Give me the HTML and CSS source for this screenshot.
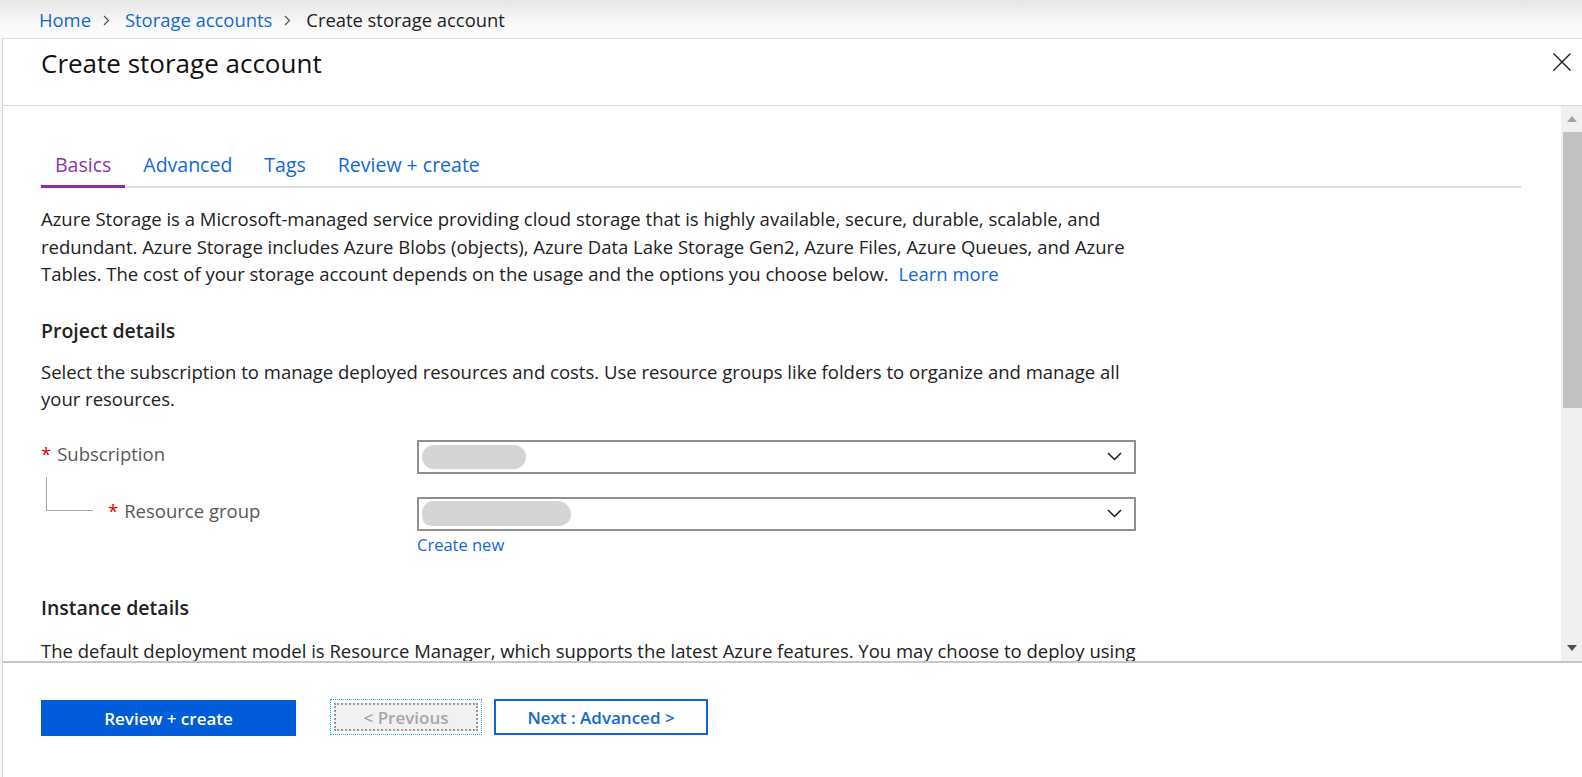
FILE: index.html
```html
<!DOCTYPE html>
<html lang="en">
<head>
<meta charset="utf-8">
<title>Create storage account</title>
<link rel="stylesheet" href="styles.css">
</head>
<body>
<div class="app">
  <nav class="breadcrumb">
    <a class="crumb-link" href="#">Home</a>
    <svg class="crumb-sep" width="7" height="11" viewBox="0 0 7 11"><path d="M1 1l4.5 4.5L1 10" fill="none" stroke="#555" stroke-width="1.2"/></svg>
    <a class="crumb-link" href="#">Storage accounts</a>
    <svg class="crumb-sep" width="7" height="11" viewBox="0 0 7 11"><path d="M1 1l4.5 4.5L1 10" fill="none" stroke="#555" stroke-width="1.2"/></svg>
    <span class="crumb-current">Create storage account</span>
  </nav>
  <section class="blade">
    <header class="blade-header">
      <h1 class="blade-title">Create storage account</h1>
      <button class="blade-close" aria-label="Close">
        <svg width="18" height="18" viewBox="0 0 18 18"><path d="M0.5 0.5L17.5 17.5M17.5 0.5L0.5 17.5" stroke="#1a1a1a" stroke-width="1.3" fill="none"/></svg>
      </button>
    </header>
    <div class="blade-body">
      <div class="blade-content">
        <div class="tabs">
          <a class="tab tab-active" href="#">Basics</a>
          <a class="tab" href="#">Advanced</a>
          <a class="tab" href="#">Tags</a>
          <a class="tab" href="#">Review + create</a>
        </div>
        <p class="intro">Azure Storage is a Microsoft-managed service providing cloud storage that is highly available, secure, durable, scalable, and redundant. Azure Storage includes Azure Blobs (objects), Azure Data Lake Storage Gen2, Azure Files, Azure Queues, and Azure Tables. The cost of your storage account depends on the usage and the options you choose below. <a class="link learn" href="#">Learn more</a></p>
        <h2 class="section-title">Project details</h2>
        <p class="section-desc">Select the subscription to manage deployed resources and costs. Use resource groups like folders to organize and manage all your resources.</p>
        <div class="form-row">
          <div class="form-label"><span class="req">*</span><span>Subscription</span></div>
          <div class="form-control">
            <div class="select">
              <span class="redacted redacted-1"></span>
              <svg class="chev" width="15" height="9" viewBox="0 0 15 9"><path d="M1 1l6.5 6.5L14 1" fill="none" stroke="#1a1a1a" stroke-width="1.5"/></svg>
            </div>
          </div>
        </div>
        <div class="form-row form-row-2">
          <div class="form-label"><span class="tree"></span><span class="req">*</span><span>Resource group</span></div>
          <div class="form-control">
            <div class="select">
              <span class="redacted redacted-2"></span>
              <svg class="chev" width="15" height="9" viewBox="0 0 15 9"><path d="M1 1l6.5 6.5L14 1" fill="none" stroke="#1a1a1a" stroke-width="1.5"/></svg>
            </div>
            <a class="link create-new" href="#">Create new</a>
          </div>
        </div>
        <h2 class="section-title section-title-2">Instance details</h2>
        <p class="section-desc section-desc-2">The default deployment model is Resource Manager, which supports the latest Azure features. You may choose to deploy using classic deployment model instead.</p>
      </div>
      <div class="scrollbar">
        <div class="sb-btn"><svg width="10" height="6" viewBox="0 0 10 6"><path d="M5 0L10 6H0z" fill="#a3a3a3"/></svg></div>
        <div class="sb-track">
          <div class="sb-thumb"></div>
        </div>
        <div class="sb-btn"><svg width="10" height="6" viewBox="0 0 10 6"><path d="M0 0H10L5 6z" fill="#505050"/></svg></div>
      </div>
    </div>
    <footer class="blade-footer">
      <button class="btn btn-primary">Review + create</button>
      <button class="btn btn-prev"><span class="btn-prev-inner">&lt; Previous</span></button>
      <button class="btn btn-next">Next : Advanced &gt;</button>
    </footer>
  </section>
</div>
</body>
</html>
```

FILE: styles.css
```css
html, body {
  margin: 0;
  padding: 0;
}
body {
  width: 1582px;
  height: 777px;
  overflow: hidden;
  background: #f6f6f6;
  font-family: "Open Sans", "Noto Sans", sans-serif;
  color: #222;
}
a { text-decoration: none; }

.app {
  display: flex;
  flex-direction: column;
  height: 777px;
}

/* breadcrumb */
.breadcrumb {
  height: 38px;
  flex: none;
  display: flex;
  align-items: center;
  padding-left: 39px;
  background: linear-gradient(to bottom, #e6e6e6, #fafafa 70%, #fbfbfb);
  font-size: 18.4px;
}
.crumb-link { color: #1367d8; }
.crumb-sep { margin: 2px 15px 0 12px; }
.crumb-current { color: #222; }

/* blade */
.blade {
  flex: 1;
  min-height: 0;
  display: flex;
  flex-direction: column;
  margin-left: 2px;
  border-left: 1px solid #d8d8d8;
  border-top: 1px solid #dcdcdc;
  background: #fff;
}
.blade-header {
  flex: none;
  height: 67px;
  box-sizing: border-box;
  border-bottom: 1px solid #d9d9d9;
  display: flex;
  justify-content: space-between;
  align-items: flex-start;
  padding: 0 11px 0 38px;
}
.blade-title {
  margin: 10px 0 0;
  font-size: 26px;
  line-height: 28px;
  font-weight: 400;
  color: #111;
}
.blade-close {
  margin-top: 14px;
  width: 18px;
  height: 18px;
  padding: 0;
  border: 0;
  background: none;
  display: block;
}
.blade-close svg { display: block; }

.blade-body {
  flex: none;
  height: 555px;
  display: flex;
  overflow: hidden;
}
.blade-content {
  flex: 1;
  min-width: 0;
  padding: 0 40px 0 38px;
  overflow: hidden;
}

/* tabs */
.tabs {
  margin-top: 46px;
  display: flex;
  gap: 4px;
  border-bottom: 2px solid #dedede;
}
.tab {
  position: relative;
  padding: 0 14px 8px;
  font-size: 19.5px;
  line-height: 26px;
  color: #1367d8;
}
.tab-active { color: #8a35a8; }
.tab-active::after {
  content: "";
  position: absolute;
  left: 0;
  right: 0;
  bottom: -2px;
  height: 3px;
  background: #8a2da5;
}

/* text */
.intro, .section-desc {
  max-width: 1095px;
  font-size: 18.5px;
  line-height: 27.6px;
  color: #222;
  margin: 17px 0 0;
}
.link { color: #1367d8; }
.learn { margin-left: 5px; }
.section-title {
  margin: 30px 0 0;
  font-size: 19.5px;
  line-height: 26px;
  font-weight: 600;
  color: #222;
}
.section-desc { margin-top: 14px; }
.section-title-2 { margin-top: 38px; }
.section-desc-2 { margin-top: 16px; }

/* form */
.form-row {
  display: flex;
  margin-top: 27px;
}
.form-row-2 { margin-top: 23px; }
.form-label {
  width: 376px;
  flex: none;
  display: flex;
  align-items: flex-start;
  font-size: 18.5px;
  line-height: 28px;
  color: #595959;
}
.req {
  color: #e00000;
  margin-right: 6px;
}
.tree {
  flex: none;
  width: 47px;
  height: 34px;
  margin: -20px 15px 0 5px;
  box-sizing: border-box;
  border-left: 1.5px solid #a6a6a6;
  border-bottom: 1.5px solid #a6a6a6;
}
.form-control {
  width: 719px;
  display: flex;
  flex-direction: column;
  align-items: flex-start;
}
.select {
  width: 100%;
  height: 34px;
  box-sizing: border-box;
  border: 2px solid #8f8f8f;
  display: flex;
  align-items: center;
  justify-content: space-between;
  padding: 0 12px 0 3px;
}
.redacted {
  display: block;
  background: #d3d4d5;
  border-radius: 12px;
}
.redacted-1 { width: 104px; height: 24px; }
.redacted-2 { width: 149px; height: 25px; border-radius: 12px 14px 12px 10px; }
.chev { display: block; }
.create-new {
  margin-top: 2px;
  font-size: 16.5px;
  line-height: 24px;
}

/* scrollbar */
.scrollbar {
  flex: none;
  width: 21px;
  background: #f0f0f0;
  display: flex;
  flex-direction: column;
}
.sb-btn {
  height: 26px;
  flex: none;
  display: flex;
  align-items: center;
  justify-content: center;
}
.sb-track {
  flex: 1;
  padding-left: 2px;
}
.sb-thumb {
  height: 276px;
  background: #c1c1c1;
}

/* footer */
.blade-footer {
  flex: 1;
  border-top: 2px solid #c6c6c6;
  display: flex;
  align-items: flex-start;
  padding: 36px 0 0 38px;
}
.btn {
  font-family: "Open Sans", "Noto Sans", sans-serif;
  font-size: 17px;
  font-weight: 600;
  height: 36px;
  box-sizing: border-box;
  cursor: pointer;
}
.btn-primary {
  margin-top: 1px;
  width: 255px;
  border: 0;
  background: #015cda;
  color: #fff;
}
.btn-prev {
  margin-left: 34px;
  width: 152px;
  padding: 3px;
  background: #fff;
  border: 1px dotted #18a9e6;
  display: flex;
}
.btn-prev-inner {
  flex: 1;
  display: flex;
  align-items: center;
  justify-content: center;
  background: #f1f1f1;
  border: 2px dotted #9a9a9a;
  color: #a6a6a6;
}
.btn-next {
  margin-left: 12px;
  width: 214px;
  background: #fff;
  border: 2px solid #0f62d8;
  color: #1367d8;
}
```
